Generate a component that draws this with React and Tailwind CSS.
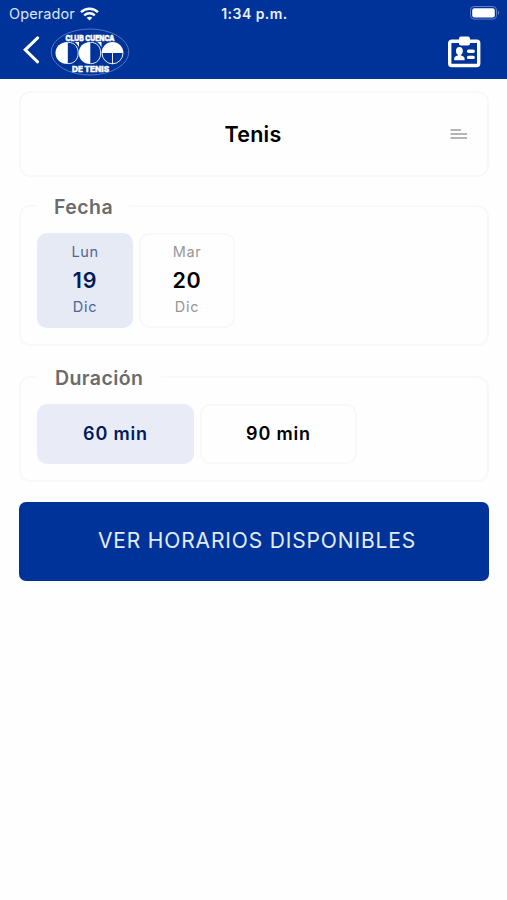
import React, { useState } from 'react';

const days = [
  { id: 1, name: 'Lun', day: '19', month: 'Dic' },
  { id: 2, name: 'Mar', day: '20', month: 'Dic' },
];

const durations = [60, 90];

const WifiIcon = () => (
  <svg width="19" height="14" viewBox="0 0 19 14" fill="none" stroke="white" strokeWidth="2.4">
    <path d="M1 5.2C5.8 0.6 13.2 0.6 18 5.2" />
    <path d="M4.2 8.4C7.2 5.6 11.8 5.6 14.8 8.4" />
    <path d="M9.5 13.6L6.7 10.8C8.3 9.4 10.7 9.4 12.3 10.8Z" fill="white" stroke="none" />
  </svg>
);

const BatteryIcon = () => (
  <svg width="30" height="14" viewBox="0 0 30 14">
    <rect x="0.5" y="0.5" width="26" height="12.6" rx="3.6" fill="none" stroke="#5f80c4" />
    <rect x="2.2" y="2.2" width="22.6" height="9.2" rx="2.2" fill="white" />
    <path d="M28 4.7C29.6 5.4 29.6 8.2 28 8.9Z" fill="#5f80c4" />
  </svg>
);

const ClubLogo = () => (
  <svg width="80" height="48" viewBox="0 0 80 48">
    <ellipse cx="40" cy="24" rx="38.8" ry="23" fill="none" stroke="#5f7cc4" strokeWidth="0.9" />
    <text x="40" y="12.8" textAnchor="middle" textLength="49" lengthAdjust="spacingAndGlyphs" fill="white" stroke="white" strokeWidth="0.5" fontFamily="Inter, sans-serif" fontWeight="800" fontSize="8">CLUB CUENCA</text>
    <text x="40.5" y="43.8" textAnchor="middle" textLength="37" lengthAdjust="spacingAndGlyphs" fill="white" stroke="white" strokeWidth="0.4" fontFamily="Inter, sans-serif" fontWeight="800" fontSize="7.2">DE TENIS</text>
    <g fill="white">
      <path d="M17.8 14C10 14 5.5 19 5.5 25S10 36 17.8 36Z" />
      <path d="M40.3 14C33 14 28.8 19 28.8 25S33 36 40.3 36Z" />
      <path d="M51.6 25A10.9 11 0 0 1 73.4 25Z" />
      <path d="M24.5 14H29V19.5C28 17 26.5 15.2 24.5 14Z" />
      <path d="M47 14H51.5V19.5C50.5 17 49 15.2 47 14Z" />
    </g>
    <g fill="none" stroke="white" strokeWidth="0.9">
      <path d="M18 14.3C24.5 14.3 28.2 19 28.2 25S24.5 35.7 18 35.7" />
      <path d="M40.5 14.3C47 14.3 50.7 19 50.7 25S47 35.7 40.5 35.7" />
      <path d="M52 25A10.5 10.8 0 0 0 73 25M62.5 25V36" />
    </g>
  </svg>
);

const BadgeIcon = () => (
  <svg width="34" height="32" viewBox="0 0 34 32">
    <rect x="1.7" y="5.2" width="29" height="24.3" rx="2" fill="none" stroke="white" strokeWidth="3.4" />
    <rect x="11" y="0.5" width="11" height="9" rx="2" fill="white" />
    <ellipse cx="11.4" cy="15" rx="3.4" ry="3.9" fill="white" />
    <path d="M6.2 24.2V22.4C6.2 20.6 8.4 19.8 10 19.5V17H12.8V19.5C14.4 19.8 16.6 20.6 16.6 22.4V24.2Z" fill="white" />
    <path d="M20.6 15.2H25.2M20.6 21.4H25.2" stroke="white" strokeWidth="3.4" strokeLinecap="round" />
  </svg>
);

const Header = () => (
  <header className="h-[79px] bg-[#003399] text-white">
    <div className="grid h-7 grid-cols-3 items-center pl-[9px] pr-[7px]">
      <div className="flex items-center gap-[5px] text-[14.5px] tracking-[0.1px] text-[#dce5f7]">
        <span>Operador</span>
        <WifiIcon />
      </div>
      <span className="-mt-[2px] text-center text-[14px] font-semibold tracking-[0.45px] text-[#eaf0fc]">1:34 p.m.</span>
      <div className="-mt-[2px] flex justify-end">
        <BatteryIcon />
      </div>
    </div>
    <div className="flex h-12 items-center pl-[22px] pr-[25px]">
      <svg className="-mt-1" width="18" height="28" viewBox="0 0 18 28" fill="none" stroke="white" strokeWidth="3">
        <path d="M15.6 1.8L3.2 13.8L15.6 25.8" strokeLinecap="round" />
      </svg>
      <div className="ml-[10px]">
        <ClubLogo />
      </div>
      <div className="ml-auto">
        <BadgeIcon />
      </div>
    </div>
  </header>
);

const Section = ({ title, className, titleClass, children }) => (
  <fieldset className={`rounded-[11px] border-2 border-[#f8f8f8] px-4 ${className}`}>
    <legend className={`h-[26px] text-[19.5px] leading-[28px] font-semibold text-[#6b6b6b] ${titleClass}`}>{title}</legend>
    {children}
  </fieldset>
);

const App = () => {
  const [day, setDay] = useState(1);
  const [duration, setDuration] = useState(60);

  return (
    <div className="h-[900px] w-[507px] bg-[#fefefe] font-['Inter',sans-serif]">
      <Header />
      <main className="pl-[19px] pr-[18px] pt-3">
        <div className="relative flex h-[86px] items-center justify-center rounded-[11px] border-2 border-[#f8f8f8]">
          <span className="pr-[2px] text-[21.5px] font-semibold tracking-[0.2px] text-black">Tenis</span>
          <svg className="absolute right-[19px] top-[35px]" width="18" height="12" viewBox="0 0 18 12" stroke="#b5b5b5" strokeWidth="1.8">
            <path d="M0.5 2H11M0.5 6H17M0.5 10H17" />
          </svg>
        </div>

        <Section title="Fecha" className="mt-4 h-[153px]" titleClass="w-[92px] pl-[17px] tracking-[0.45px]">
          <div className="mt-[14px] flex gap-[6px]">
            {days.map((item) => (
              <button
                key={item.id}
                onClick={() => setDay(item.id)}
                className={`flex h-[95px] w-[96px] flex-col items-center rounded-[10px] border-2 pt-[8px] ${
                  day === item.id ? 'border-[#e5eaf5] bg-[#e5eaf5] text-[#50649a]' : 'border-[#f8f8f8] text-[#969696]'
                }`}
              >
                <span className="text-[14.5px] leading-[18px] tracking-[0.6px]">{item.name}</span>
                <span className={`mt-[5px] mb-[4px] text-[21.5px] leading-[28px] font-semibold tracking-[0.8px] ${day === item.id ? 'text-[#001a5c]' : 'text-black'}`}>
                  {item.day}
                </span>
                <span className="text-[14.5px] leading-[18px] tracking-[0.7px]">{item.month}</span>
              </button>
            ))}
          </div>
        </Section>

        <Section title="Duración" className="mt-[18px] h-[118px]" titleClass="w-[124px] pl-[18px] tracking-[0.4px]">
          <div className="mt-[14px] flex gap-[6px]">
            {durations.map((item) => (
              <button
                key={item}
                onClick={() => setDuration(item)}
                className={`h-[60px] w-[157px] rounded-[10px] border-2 pb-[2px] text-[18px] font-semibold tracking-[0.85px] ${
                  duration === item ? 'border-[#e9ecf7] bg-[#e9ecf7] text-[#001a5c]' : 'border-[#f8f8f8] text-black'
                }`}
              >
                {item} min
              </button>
            ))}
          </div>
        </Section>

        <button className="mt-5 h-[79px] w-full rounded-[7px] bg-[#003399] pb-[2px] pl-[6px] text-[21px] tracking-[0.85px] text-[#e4ecfb]">
          VER HORARIOS DISPONIBLES
        </button>
      </main>
    </div>
  );
};

export default App;
